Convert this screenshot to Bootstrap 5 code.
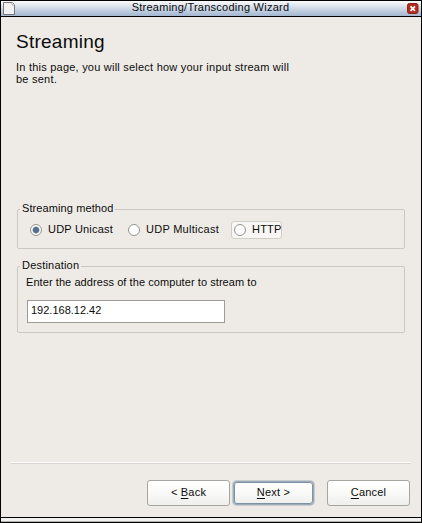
<!DOCTYPE html>
<html lang="en">
<head>
<meta charset="utf-8">
<title>Streaming/Transcoding Wizard</title>
<link rel="stylesheet" href="https://cdn.jsdelivr.net/npm/bootstrap@5.3.0/dist/css/bootstrap.min.css">
<style>
body{font:11px/12px "Liberation Sans",Arial,sans-serif;color:#0c0c0c;background:#eeebe6;letter-spacing:.2px}
.wizard{width:422px;height:523px;border:1px solid #000;background:#eeebe6;overflow:hidden}
.titlebar{height:16px;background:linear-gradient(#fbfcfd,#d3dce8 45%,#a1b6d0);border-bottom:1px solid #000;padding:0 2px 0 1px}
.titlebar svg{display:block;flex:none}
.caption-text{line-height:12px;letter-spacing:.25px;margin-right:2px}
.page{height:500px;padding:0 10px}
.heading{font-size:19px;line-height:24px;letter-spacing:.25px;margin:13px 0 0 5px;font-weight:400}
.intro{margin:7px 0 0 5px;height:148px;letter-spacing:.225px}
.group{border:1px solid #cbc8c3;border-radius:2px;margin:0 6px;width:388px}
.group-title{width:max-content;margin:-8px 0 0 2px;padding:0 2px;background:#eeebe6}
.methods{height:40px}
.methods .group-title{letter-spacing:.1px}
.destination{height:67px;margin-top:17px}
.choice{height:18px;margin-top:7px;border:1px solid transparent;border-radius:3px}
.choice input{appearance:none;width:12px;height:12px;margin:0;border:1px solid #92948c;border-radius:50%;background:#fff;flex:none}
.choice input:checked{background:radial-gradient(circle,#52708f 0 2.6px,#8fa3b5 3.2px,#fff 3.9px)}
.choice span{margin-left:6px;padding-bottom:2px;white-space:nowrap}
.unicast{width:98px;margin-left:11px}
.multicast{width:98px;letter-spacing:.27px}
.http{width:51px;margin-left:6px;padding-left:2px}
.hovered{background:#f8f7f5;border-color:#cfcfc6}
.address{width:198px;height:23px;border:1px solid #9d9b97;border-radius:0;background:#fff;padding:0 4px 3px 3px;font:inherit;color:inherit;letter-spacing:0;margin:12px 0 0 9px;display:block}
.prompt{margin:5px 0 0 8px;letter-spacing:.07px}
.rule{height:2px;margin-top:129px;background:linear-gradient(#fff 50%,#d8d5d0 50%)}
.actions{padding-right:1px}
.wbtn{height:26px;width:83px;border:1px solid #a5a69f;border-radius:3px;background:linear-gradient(#fff,#f9f9f8 50%,#efefee);font:11px/12px "Liberation Sans",Arial,sans-serif;letter-spacing:.2px;color:#0c0c0c;padding:0 0 2px}
.wbtn u{text-underline-offset:2px;text-decoration-thickness:1px}
.default-btn{width:79px;height:22px;border-color:#7f91a5;box-shadow:0 0 0 1px #9eabb8,0 0 0 2px #c5cbd1;margin:0 14px 0 4px}
.grip{height:5px;border-top:1px solid #000;background:linear-gradient(#f3f1ed 65%,#b5b3af 65%)}
</style>
<script src="https://cdn.jsdelivr.net/npm/bootstrap@5.3.0/dist/js/bootstrap.bundle.min.js"></script>
</head>
<body>
<main class="wizard d-flex flex-column">
  <header class="titlebar d-flex justify-content-between">
    <svg width="14" height="15" viewBox="0 0 14 15"><path d="M1.5 1.5h9l2 2v10h-11z" fill="#f1f1ef" stroke="#77787a"/><path d="M10 1.5v2.5h2.500" fill="#fff" stroke="#aaa" stroke-width=".8"/></svg>
    <span class="caption-text">Streaming/Transcoding Wizard</span>
    <svg width="12" height="15" viewBox="0 0 12 15"><rect x=".5" y="2.500" width="10.5" height="10" rx="2" fill="#b42b1d" stroke="#8c2118"/><path d="M3.5 5.300l4.5 4.500M8 5.300L3.500 9.800" stroke="#fff" stroke-width="1.700"/></svg>
  </header>
  <section class="page d-flex flex-column">
    <h1 class="heading">Streaming</h1>
    <p class="intro">In this page, you will select how your input stream will<br>be sent.</p>
    <div class="group methods">
      <div class="group-title">Streaming method</div>
      <div class="d-flex">
        <label class="choice unicast d-flex align-items-center"><input type="radio" name="m" checked><span>UDP Unicast</span></label>
        <label class="choice multicast d-flex align-items-center"><input type="radio" name="m"><span>UDP Multicast</span></label>
        <label class="choice http hovered d-flex align-items-center"><input type="radio" name="m"><span>HTTP</span></label>
      </div>
    </div>
    <div class="group destination">
      <div class="group-title">Destination</div>
      <div class="prompt">Enter the address of the computer to stream to</div>
      <input class="address" type="text" value="192.168.12.42" aria-label="Address">
    </div>
    <div class="rule"></div>
    <div class="actions d-flex justify-content-end align-items-center mt-3">
      <button class="btn wbtn">&lt; <u>B</u>ack</button>
      <button class="btn wbtn default-btn"><u>N</u>ext &gt;</button>
      <button class="btn wbtn"><u>C</u>ancel</button>
    </div>
  </section>
  <footer class="grip"></footer>
</main>
</body>
</html>
